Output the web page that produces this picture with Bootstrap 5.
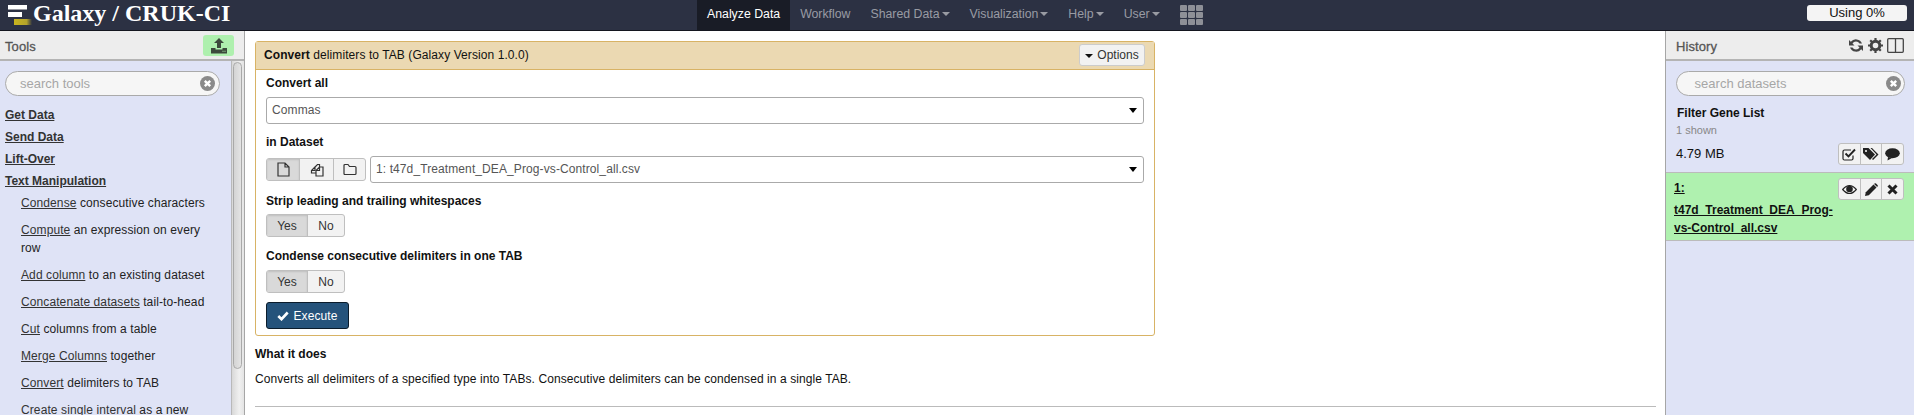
<!DOCTYPE html>
<html lang="en">
<head>
  <meta charset="UTF-8" />
  <title>Galaxy / CRUK-CI</title>
  <link href="https://cdn.jsdelivr.net/npm/bootstrap@5.3.0/dist/css/bootstrap.min.css" rel="stylesheet">
  <style>
    html, body { height: 100%; overflow: hidden; }
    body { font: 12px/20px "Liberation Sans", Arial, sans-serif; color: #111; background: #fff; }
    svg { display: block; flex: none; }

    /* masthead */
    .mast { height: 31px; background: #2c3143; border-bottom: 1px solid #14161f; }
    .mast-logo { width: 245px; flex: none; padding-left: 8px; gap: 1px; }
    .mast-title { font: bold 24px/25px "Liberation Serif", serif; color: #fff; white-space: nowrap; margin-top: -4px; }
    .mast-nav { padding-left: 452px; font-size: 12.3px; }
    .mast-link { height: 30px; line-height: 28px; padding: 0 10px; color: #999ba3; white-space: nowrap; }
    .mast-link.on { color: #fff; background: #191c26; }
    .drop-caret { display: inline-block; border: 4px solid transparent; border-top-color: #999ba3; border-bottom: 0; margin-left: 2px; vertical-align: 2px; }
    .mast-apps { display: grid; grid-template-columns: repeat(3, 7px); grid-auto-rows: 6px; gap: 1px; margin: 5px 0 0 10px; }
    .mast-apps i { background: #8e9097; border-radius: 1px; }
    .quota { width: 100px; height: 16px; line-height: 16px; background: #f4f4f4; border-radius: 3px; text-align: center; color: #111; margin: 5px 7px 0 0; font-size: 13px; }

    .work { height: calc(100vh - 31px); }
    .side { background: #dfe3f6; flex: none; overflow: hidden; }
    .side-l { width: 245px; border-right: 1px solid #a6a6a6; }
    .side-r { width: 249px; border-left: 1px solid #a6a6a6; }
    .side-head { height: 30px; background: #ededed; border-bottom: 2px solid #b4b4b4; padding-left: 5px; color: #555; font-size: 13px; line-height: 31px; -webkit-text-stroke: .3px #555; letter-spacing: .1px; }
    .side-r .side-head { padding: 0 10px 0 10px; }
    .up-btn { width: 31px; height: 21px; margin: 4px 10px 0 0; background: #aef0ae; border-radius: 3px; }
    .head-icons { gap: 4px; margin-top: 7px; }

    .find { position: relative; height: 25px; border: 1px solid #aaa; border-radius: 13px; background: #f6f6f6; color: #a6a6a6; font-size: 13px; line-height: 23px; padding-left: 14px; }
    .find-x { position: absolute; right: 4px; top: 4px; }
    .tools-wrap { height: calc(100% - 30px); }
    .tools { width: 231px; padding: 10px 11px 0 5px; }
    .tool-sec { display: block; font-weight: bold; color: #333; line-height: 22px; }
    .tool-item { padding-left: 16px; line-height: 18px; color: #222; margin-bottom: 9px; letter-spacing: .1px; }
    .tool-sec:hover, .tool-item a:hover { color: #333; }
    .tool-item a { color: #333; }
    .sbar { width: 13px; border-left: 1px solid #b9b9b9; background: linear-gradient(90deg, #d8d8d8, #f0f0f0 60%, #e4e4e4); padding: 1px 2px 0 1px; }
    .sbar-thumb { height: 307px; border: 1px solid #a9a9a9; border-radius: 5px; background: linear-gradient(90deg, #d4d4d4, #e4e4e4); }

    /* center */
    .center { padding: 10px 9px 0 10px; min-width: 0; overflow: hidden; }
    .tool-form { width: 900px; height: 295px; border: 1px solid #d8b365; border-radius: 3px; }
    .tool-form-head { height: 28px; background: #ebd9b2; border-bottom: 1px solid #d8b365; padding-left: 8px; line-height: 26px; }
    .opt-btn { width: 66px; height: 22px; margin: 2px 9px 0 0; background: #f2f2f2; border: 1px solid #ccc; border-radius: 3px; color: #333; line-height: 20px; text-align: center; }
    .opt-btn i { display: inline-block; border: 4px solid transparent; border-top-color: #111; border-bottom: 0; vertical-align: 1px; margin-right: 4px; }
    .tool-form-body { padding: 0 10px; }
    .fld-label { font-weight: bold; color: #111; line-height: 20px; }
    .fake-sel { height: 27px; border: 1px solid #aaa; border-radius: 3px; line-height: 25px; padding: 0 5px; color: #555; letter-spacing: .1px; }
    .sel-caret { display: inline-block; border: solid transparent; border-width: 5px 4px 0; border-top-color: #000; width: 0; margin-right: 1px; }
    .grp { border: 1px solid #bfbfbf; border-radius: 3px; background: #f2f2f2; overflow: hidden; }
    .grp > span { display: flex; align-items: center; justify-content: center; border-right: 1px solid #bfbfbf; color: #333; }
    .grp > span:last-child { border-right: 0; }
    .grp > span.sel { background: #d9d9d9; box-shadow: inset 0 1px 2px rgba(0,0,0,.12); }
    .grp-yn { width: 79px; height: 23px; }
    .grp-yn span:first-child { width: 41px; }
    .grp-yn span:last-child { flex: 1; }
    .grp-src { width: 100px; height: 23px; }
    .exec-btn { width: 83px; height: 27px; background: #25537b; border: 1px solid #0b1c2b; border-radius: 3px; color: #fff; gap: 4px; --bs-btn-padding-y: 0; --bs-btn-padding-x: 0; font-size: 12px; letter-spacing: .1px; }
    .exec-btn:hover { background: #25537b; color: #fff; }
    .help-txt { letter-spacing: .08px; }
    .help-rule { border: 0; border-top: 1px solid #bbb; opacity: 1; margin: 0; }

    /* history */
    .hist-name { font-weight: bold; padding-left: 11px; line-height: 20px; margin-top: 2px; }
    .hist-count { color: #888; font-size: 11px; line-height: 16px; padding-left: 10px; margin-top: -1px; }
    .hist-size { padding: 0 10px; font-size: 13px; }
    .grp-hist { width: 66px; height: 22px; }
    .grp-hist span { flex: 1; }
    .hda { height: 69px; background: #aff1af; border-top: 1px solid #bbb; border-bottom: 1px solid #bbb; padding: 5px 10px 0 8px; }
    .hda a { color: #111; font-weight: bold; line-height: 18px; display: block; }
    .hda a:hover { color: #111; }
    .hda-txt { width: 165px; padding-top: 1px; }
  </style>
</head>
<body>
  <div class="mast d-flex">
    <div class="mast-logo d-flex align-items-center">
      <svg width="24" height="20" viewBox="0 0 24 20">
        <defs><linearGradient id="gold"><stop offset="0" stop-color="#c9b51e"/><stop offset=".7" stop-color="#b3a32c"/><stop offset="1" stop-color="#2c3143"/></linearGradient></defs>
        <rect x="0" y="0" width="19" height="4.500" fill="#fff"/>
        <rect x="0" y="7" width="14" height="5" fill="#fff"/>
        <rect x="6" y="14" width="18" height="6" fill="url(#gold)"/>
      </svg>
      <div class="mast-title">Galaxy / CRUK-CI</div>
    </div>
    <div class="mast-nav d-flex flex-grow-1">
      <div class="mast-link on">Analyze Data</div>
      <div class="mast-link">Workflow</div>
      <div class="mast-link">Shared Data<span class="drop-caret"></span></div>
      <div class="mast-link">Visualization<span class="drop-caret"></span></div>
      <div class="mast-link">Help<span class="drop-caret"></span></div>
      <div class="mast-link">User<span class="drop-caret"></span></div>
      <div class="mast-apps"><i></i><i></i><i></i><i></i><i></i><i></i><i></i><i></i><i></i></div>
    </div>
    <div class="quota">Using 0%</div>
  </div>

  <div class="work d-flex">
    <div class="side side-l">
      <div class="side-head d-flex justify-content-between">
        <span>Tools</span>
        <div class="up-btn d-flex align-items-center justify-content-center">
          <svg width="16" height="16" viewBox="0 0 16 16" fill="#3c4a3c"><path d="M8 0l5 5H10v5H6V5H3z"/><path d="M0 10h4.500v1.500h7V10H16v5.500H0zM11.500 12.800h1v1h-1zM13.500 12.800h1v1h-1z" fill-rule="evenodd"/></svg>
        </div>
      </div>
      <div class="tools-wrap d-flex">
        <div class="tools">
          <div class="find mb-2">search tools
            <svg class="find-x" width="15" height="15" viewBox="0 0 15 15"><circle cx="7.500" cy="7.500" r="7.500" fill="#8a8a8a"/><path d="M4.800 4.800l5.400 5.400M10.200 4.800l-5.400 5.400" stroke="#fff" stroke-width="2.400"/></svg>
          </div>
          <a class="tool-sec" href="#" style="margin-top:7px">Get Data</a>
          <a class="tool-sec" href="#">Send Data</a>
          <a class="tool-sec" href="#">Lift-Over</a>
          <a class="tool-sec" href="#" style="margin-bottom:2px">Text Manipulation</a>
          <div class="tool-item"><a href="#">Condense</a> consecutive characters</div>
          <div class="tool-item"><a href="#">Compute</a> an expression on every row</div>
          <div class="tool-item"><a href="#">Add column</a> to an existing dataset</div>
          <div class="tool-item"><a href="#">Concatenate datasets</a> tail-to-head</div>
          <div class="tool-item"><a href="#">Cut</a> columns from a table</div>
          <div class="tool-item"><a href="#">Merge Columns</a> together</div>
          <div class="tool-item"><a href="#">Convert</a> delimiters to TAB</div>
          <div class="tool-item"><a href="#">Create single interval</a> as a new dataset</div>
        </div>
        <div class="sbar"><div class="sbar-thumb"></div></div>
      </div>
    </div>

    <div class="center flex-grow-1">
      <div class="tool-form">
        <div class="tool-form-head d-flex justify-content-between">
          <span class="help-txt"><b>Convert</b> delimiters to TAB (Galaxy Version 1.0.0)</span>
          <div class="opt-btn"><i></i>Options</div>
        </div>
        <div class="tool-form-body">
          <div class="fld-label" style="margin-top:3px;margin-bottom:4px">Convert all</div>
          <div class="fake-sel d-flex justify-content-between align-items-center">Commas<span class="sel-caret"></span></div>
          <div class="fld-label" style="margin-top:8px;margin-bottom:4px">in Dataset</div>
          <div class="d-flex align-items-center gap-1">
            <div class="grp grp-src d-flex flex-shrink-0">
              <span class="sel" style="width:33px">
                <svg width="13" height="15" viewBox="0 0 13 15" fill="none" stroke="#333" stroke-width="1.200"><path d="M1 1h7l4 4v9H1zM8 1v4h4"/></svg>
              </span>
              <span style="width:34px">
                <svg width="14" height="15" viewBox="0 0 14 15" fill="none" stroke="#333" stroke-width="1.200"><path d="M5 5L1.500 8.500V11H6M5 5V8.500H1.500M5 5L7.500 2.500H9.500V5"/><path d="M9.500 5H13V14H6V8.500zM9.500 5V8.500H6"/></svg>
              </span>
              <span class="flex-grow-1">
                <svg width="14" height="13" viewBox="0 0 14 13" fill="none" stroke="#333" stroke-width="1.200"><path d="M1 2.500Q1 1.500 2 1.500H5L6.500 3.500H12Q13 3.500 13 4.500V10.500Q13 11.500 12 11.500H2Q1 11.500 1 10.500z"/></svg>
              </span>
            </div>
            <div class="fake-sel d-flex justify-content-between align-items-center flex-grow-1">1: t47d_Treatment_DEA_Prog-vs-Control_all.csv<span class="sel-caret"></span></div>
          </div>
          <div class="fld-label" style="margin-top:8px;margin-bottom:3px">Strip leading and trailing whitespaces</div>
          <div class="grp grp-yn d-flex"><span class="sel">Yes</span><span>No</span></div>
          <div class="fld-label" style="margin-top:9px;margin-bottom:4px">Condense consecutive delimiters in one TAB</div>
          <div class="grp grp-yn d-flex"><span class="sel">Yes</span><span>No</span></div>
          <button class="btn exec-btn d-flex align-items-center justify-content-center" style="margin-top:9px">
            <svg width="12" height="10" viewBox="0 0 12 10"><path d="M1.300 5l3.200 3.200L10.700 1.500" fill="none" stroke="#fff" stroke-width="2.600"/></svg>
            Execute
          </button>
        </div>
      </div>
      <div class="fw-bold" style="margin-top:8px">What it does</div>
      <div class="help-txt" style="margin-top:5px">Converts all delimiters of a specified type into TABs. Consecutive delimiters can be condensed in a single TAB.</div>
      <hr class="help-rule" style="margin-top:17px">
    </div>

    <div class="side side-r">
      <div class="side-head d-flex justify-content-between">
        <span>History</span>
        <div class="head-icons d-flex">
          <svg width="16" height="15" viewBox="0 0 16 15" fill="#444"><path d="M14 5.500A6.500 6.500 0 0 0 2.800 3.800L1 2V7.500H6.500L4.500 5.500A4 4 0 0 1 11.500 5.500z"/><path d="M2 9.500A6.500 6.500 0 0 0 13.200 11.200L15 13V7.500H9.500L11.500 9.500A4 4 0 0 1 4.500 9.500z"/></svg>
          <svg width="15" height="15" viewBox="0 0 15 15"><circle cx="7.500" cy="7.500" r="4.300" fill="none" stroke="#444" stroke-width="3"/><path d="M7.500 0v15M0 7.500h15M2.200 2.200l10.600 10.600M12.800 2.200L2.200 12.800" stroke="#444" stroke-width="2.200" stroke-dasharray="3 9 3"/></svg>
          <svg width="17" height="15" viewBox="0 0 17 15" fill="none" stroke="#444" stroke-width="1.300"><rect x=".7" y=".7" width="15.600" height="13.600" rx="1"/><path d="M8.500 .7v13.600"/></svg>
        </div>
      </div>
      <div class="find" style="margin:10px 9px 7px 10px">&nbsp;search datasets
        <svg class="find-x" style="right:3px" width="15" height="15" viewBox="0 0 15 15"><circle cx="7.500" cy="7.500" r="7.500" fill="#8a8a8a"/><path d="M4.800 4.800l5.400 5.400M10.200 4.800l-5.400 5.400" stroke="#fff" stroke-width="2.400"/></svg>
      </div>
      <div class="hist-name">Filter Gene List</div>
      <div class="hist-count">1 shown</div>
      <div class="hist-size d-flex justify-content-between align-items-center" style="margin:5px 0 7px">
        <span>4.79 MB</span>
        <div class="grp grp-hist d-flex">
          <span><svg width="14" height="13" viewBox="0 0 14 13" fill="none" stroke="#222" stroke-width="1.200"><path d="M11 7.500v3q0 1.500-1.500 1.500H2.500Q1 12 1 10.500v-7Q1 2 2.500 2H9"/><path d="M3.500 5.500l3 3L13 1.500" stroke-width="1.900"/></svg></span>
          <span><svg width="16" height="14" viewBox="0 0 16 14" fill="#222"><path d="M0 1h5.500L12 7.500 7 13 0 6z"/><path d="M7.500 1h1.500l6.500 6.500L10 13l-1-1 4.500-4.500z"/><circle cx="3" cy="4" r="1.100" fill="#f2f2f2"/></svg></span>
          <span><svg width="15" height="13" viewBox="0 0 15 13" fill="#222"><ellipse cx="7.500" cy="5.300" rx="7.300" ry="5"/><path d="M3 9l-.5 3.500L7 10z"/></svg></span>
        </div>
      </div>
      <div class="hda d-flex justify-content-between">
        <div class="hda-txt">
          <a href="#" class="mb-1">1:</a>
          <a href="#">t47d_Treatment_DEA_Prog-vs-Control_all.csv</a>
        </div>
        <div class="grp grp-hist d-flex">
          <span><svg width="15" height="11" viewBox="0 0 15 11"><path d="M.7 5.500Q7.500-2.500 14.300 5.500 7.500 13.500.7 5.500z" fill="none" stroke="#222" stroke-width="1.200"/><circle cx="7.500" cy="5" r="3.300" fill="#222"/></svg></span>
          <span><svg width="13" height="13" viewBox="0 0 13 13" fill="#222"><path d="M0 13l.8-3.800L8.500 1.500l3 3L3.800 12.200z"/><path d="M9.500.5q.8-.6 1.500 0l1.500 1.500q.6.700 0 1.500l-.4.400-3-3z"/></svg></span>
          <span><svg width="11" height="11" viewBox="0 0 11 11"><path d="M1.500 1.500l8 8M9.500 1.500l-8 8" stroke="#222" stroke-width="3"/></svg></span>
        </div>
      </div>
    </div>
  </div>
</body>
</html>
